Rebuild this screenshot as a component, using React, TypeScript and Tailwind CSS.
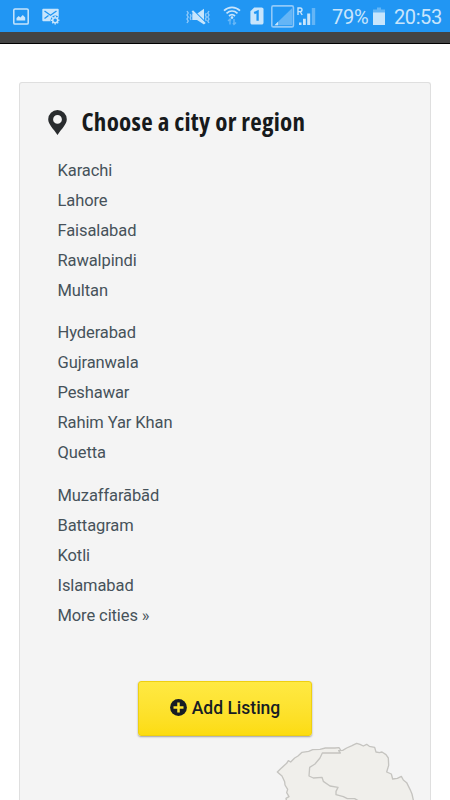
const cityGroups = [
    ["Karachi", "Lahore", "Faisalabad", "Rawalpindi", "Multan"],
    ["Hyderabad", "Gujranwala", "Peshawar", "Rahim Yar Khan", "Quetta"],
    ["Muzaffarābād", "Battagram", "Kotli", "Islamabad", "More cities »"],
]

function StatusBar() {
    return (
        <div className="flex h-8 items-start bg-[#2196f3] text-[#c8e5fc]">
            <svg className="ml-[13px] mt-2 h-[17px] w-4" viewBox="0 0 16 17" fill="none">
                <rect x="0.8" y="0.9" width="14.4" height="15.2" rx="1.2" stroke="currentColor" strokeWidth="1.5" />
                <path d="M3.5 12.5V10l2.2-2 1.7 1.4L9.8 7l2.4 2.5v3z" fill="currentColor" />
            </svg>
            <svg className="ml-[13px] mt-2 h-[17px] w-[18px]" viewBox="0 0 18 17">
                <rect x="0.3" y="0.7" width="16.4" height="12.6" rx="1" fill="currentColor" />
                <path d="M2.5 3l6 4.2 6-4.2M2.5 10.5l4-3" fill="none" stroke="#2196f3" strokeWidth="1.4" />
                <circle cx="13.2" cy="12.2" r="4.6" fill="#2196f3" />
                <circle cx="13.2" cy="12.2" r="2.5" fill="none" stroke="currentColor" strokeWidth="1.5" />
                <path d="M13.2 8v1.2M13.2 15.2v1.2M9 12.2h1.2M16.2 12.2h1.2M10.2 9.2l.9.9M15.3 14.3l.9.9M10.2 15.2l.9-.9M15.3 10.1l.9-.9" stroke="currentColor" strokeWidth="1.5" />
            </svg>
            <svg className="ml-[126px] mt-2 h-[18px] w-6" viewBox="0 0 24 18">
                <path d="M6.3 5.2l5 .2L18 .8v15.8L11 12H6.3z" fill="currentColor" />
                <path d="M7.2 2.2l12.5 12.3" stroke="#2196f3" strokeWidth="1.3" />
                <path d="M6.3 3l12.7 12.6" stroke="currentColor" strokeWidth="2" />
                <path d="M1 3l1.2 2L1 7l1.2 2L1 11l1.2 2L1 15M4.2 6l.8 2-.8 2 .8 2M20.3 5l-.8 2 .8 2-.8 2 .8 2M23 3l-1.2 2L23 7l-1.2 2L23 11l-1.2 2 1.2 2" fill="none" stroke="#8fc9fa" strokeWidth="1.4" />
            </svg>
            <svg className="ml-[13px] mt-1.5 h-5 w-[18px]" viewBox="0 0 18 20" fill="none">
                <path d="M1 4.7c4.7-4.4 11.3-4.4 16 0M3.5 7.4c3.3-3 7.7-3 11 0M6 10c1.9-1.7 4.1-1.7 6 0" stroke="currentColor" strokeWidth="1.7" />
                <circle cx="9" cy="11.6" r="1.3" fill="currentColor" />
                <path d="M7 18.5v-5.4M5 15l2-2 1 1.5M11 13v5.4M13 16.5l-2 2-1-1.5" stroke="#69b8f7" strokeWidth="1.4" />
            </svg>
            <svg className="ml-[9px] mt-[7px] h-[18px] w-[14px]" viewBox="0 0 14 18">
                <path d="M4.2.4h7.5c1 0 1.8.8 1.8 1.8v13.6c0 1-.8 1.8-1.8 1.8H2.2c-1 0-1.8-.8-1.8-1.8V4.2z" fill="currentColor" />
                <path d="M4.2 6.1l3.4-1.6v9.2" fill="none" stroke="#2196f3" strokeWidth="2.3" />
            </svg>
            <svg className="ml-[7px] mt-[5px] h-[23px] w-6" viewBox="0 0 24 23">
                <rect x="0.8" y="0.9" width="21.6" height="21" rx="1.5" fill="none" stroke="#90c9f9" strokeWidth="1.6" />
                <path d="M3.5 20.2L21 3.2v17z" fill="#64b5f6" />
                <path d="M3.5 20.2L7 16.8v3.4z" fill="currentColor" />
            </svg>
            <svg className="ml-0.5 mt-[7px] h-[19px] w-[19px]" viewBox="0 0 19 19">
                <path d="M1 8V1h2.2a1.8 1.8 0 0 1 0 3.6H1M3.2 4.6L5.2 8" fill="none" stroke="currentColor" strokeWidth="1.4" />
                <path d="M2 15.4h2.5V18H2zM6 11.7h2.8V18H6zM10.2 6.5h3V18h-3z" fill="currentColor" />
                <path d="M14.8 1h3.4v17h-3.4z" fill="#64b5f6" />
            </svg>
            <span className="ml-4 mt-[5px] w-9 whitespace-nowrap text-[20px] leading-6 tracking-[-0.2px]">79%</span>
            <svg className="ml-[5px] mt-[7px] h-[18px] w-3" viewBox="0 0 12 18">
                <path d="M4 .5h4v2h4V6H0V2.5h4z" fill="#64b5f6" />
                <path d="M0 5.5h12V18H0z" fill="currentColor" />
            </svg>
            <span className="ml-[9px] mt-[5px] whitespace-nowrap text-[20px] leading-6 tracking-[-0.4px]">20:53</span>
        </div>
    )
}

function PinIcon() {
    return (
        <svg className="h-[25px] w-[19px]" viewBox="0 0 19 25">
            <path fillRule="evenodd" d="M9.5 0A9.3 9.3 0 0 0 .2 9.3C.2 14.5 5.5 18.8 9.5 25c4-6.2 9.3-10.5 9.3-15.7A9.3 9.3 0 0 0 9.5 0zm0 5a4.4 4.4 0 1 1 0 8.8 4.4 4.4 0 0 1 0-8.8z" fill="#292c2e" />
        </svg>
    )
}

function RegionMap() {
    return (
        <svg className="absolute bottom-0 right-3.5 h-[60px] w-[142px]" viewBox="42 30 426 180" fill="#f0efeb" stroke="#c5c4c0" strokeWidth="4" strokeLinejoin="round">
            <path d="M80 215L78 205 87 200 80 188 83 178 75 165 74 155 66 138 52 126 62 116 80 100 85 92 92 96 104 84 114 78 126 67 146 64 158 59 180 58 196 54 225 54 237 53 243 62 300 120 300 215z" />
            <path d="M300 215L284 206 262 206 250 200 228 194 228 184 234 172 210 168 190 154 186 142 160 144 147 138 149 112 165 102 180 84 187 69 220 69 241 69 236 62 248 61 260 54 276 47 282 44 290 40 300 43 310 48 320 43 328 49 344 52 348 66 358 68 366 66 378 74 385 84 386 106 380 126 394 132 398 147 412 145 424 139 430 150 440 158 450 178 456 192 461 215z" />
        </svg>
    )
}

export default function App() {
    return (
        <div className="flex h-[800px] flex-col overflow-hidden bg-white font-['Roboto',sans-serif]">
            <StatusBar />
            <div className="h-3 shrink-0 border-b border-black bg-[#444]" />
            <main className="relative ml-[19px] mr-[19px] mt-[38px] flex-1 rounded-t-[3px] border border-b-0 border-[#dfdfdf] bg-[#f4f4f4]">
                <div className="flex h-[52px] items-end pl-7">
                    <PinIcon />
                    <h1 className="ml-[14.5px] whitespace-nowrap font-['Open_Sans',sans-serif] text-[25px] font-bold leading-[27px] tracking-[0.27px] text-[#171a1c] font-stretch-condensed">
                        Choose a city or region
                    </h1>
                </div>
                <div className="mt-[20.75px] flex flex-col gap-[12.5px] pl-[37.5px] text-[16.5px] leading-[30px] tracking-[-0.1px] text-[#46525a]">
                    {cityGroups.map((cities) => (
                        <ul key={cities[0]}>
                            {cities.map((city) => (
                                <li key={city}>{city}</li>
                            ))}
                        </ul>
                    ))}
                </div>
                <button className="relative z-10 ml-[118px] mt-[50.25px] flex h-[55px] w-[174px] items-center justify-center rounded-[3px] border border-[#efd010] bg-gradient-to-b from-[#ffe942] to-[#fcdc10] pb-[3px] text-[17.5px] font-medium text-[#171d24] shadow-[0_1px_2px_rgba(0,0,0,0.35)]">
                    <svg className="mr-[5px] h-[17px] w-[17px]" viewBox="0 0 17 17">
                        <circle cx="8.5" cy="8.5" r="8.4" fill="#171d24" />
                        <path d="M8.5 3.5v10M3.5 8.5h10" stroke="#fee42e" strokeWidth="2.5" />
                    </svg>
                    <span className="relative top-px">Add Listing</span>
                </button>
                <RegionMap />
            </main>
        </div>
    )
}
